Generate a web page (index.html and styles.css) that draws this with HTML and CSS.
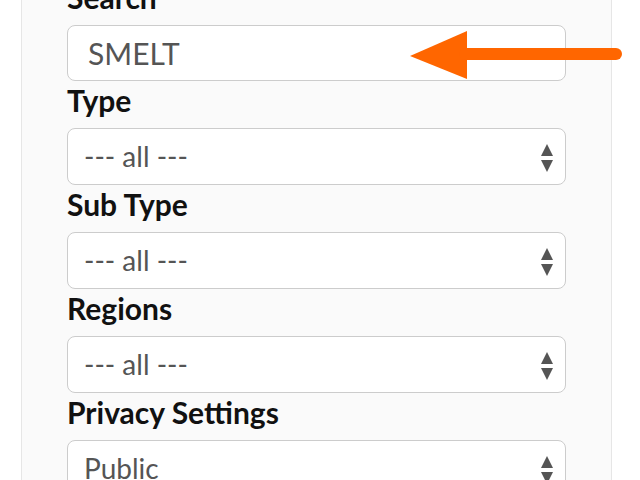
FILE: index.html
```html
<!DOCTYPE html>
<html lang="en">
<head>
    <meta charset="UTF-8">
    <meta name="viewport" content="width=device-width, initial-scale=1.0">
    <title>Search filters</title>
    <link rel="stylesheet" href="styles.css">
</head>
<body>
    <div class="panel">
        <form class="filters">
            <label class="label" for="search">Search</label>
            <div class="field">
                <input class="control" id="search" type="text" value="SMELT">
                <svg class="pointer" width="220" height="52" viewBox="0 0 220 52">
                    <polygon points="0,25 57,0 57,48" fill="#ff6600"/>
                    <line x1="55" y1="23" x2="206" y2="23" stroke="#ff6600" stroke-width="12" stroke-linecap="round"/>
                </svg>
            </div>

            <label class="label">Type</label>
            <div class="select">--- all ---</div>

            <label class="label">Sub Type</label>
            <div class="select">--- all ---</div>

            <label class="label">Regions</label>
            <div class="select">--- all ---</div>

            <label class="label">Privacy Settings</label>
            <div class="select">Public</div>
        </form>
    </div>
</body>
</html>
```

FILE: styles.css
```css
html, body {
    margin: 0;
    background-color: #ffffff;
    font-family: Lato, "Open Sans", sans-serif;
}
.panel {
    margin-left: 21px;
    width: 589px;
    margin-top: -22px;
    height: 520px;
    background-color: #fafafa;
    border-left: 1px solid #e6e6e6;
    border-right: 1px solid #e6e6e6;
}
.filters {
    display: flex;
    flex-direction: column;
    padding-left: 45px;
    width: 499px;
}
.label {
    font-size: 30px;
    font-weight: bold;
    color: #111;
    height: 47px;
    line-height: 39px;
}
.field {
    position: relative;
}
.control,
.select {
    box-sizing: border-box;
    width: 499px;
    height: 57px;
    border: 1px solid #cccccc;
    border-radius: 8px;
    background-color: #ffffff;
    color: #555;
    font-family: Lato, "Open Sans", sans-serif;
    font-size: 28px;
    padding: 0 20px;
    line-height: 55px;
}
.control {
    height: 56px;
    display: block;
    outline: none;
    font-size: 30px;
}
.select {
    padding-left: 16px;
    position: relative;
}
.select::before {
    content: "";
    position: absolute;
    right: 12px;
    top: 15px;
    border-left: 6px solid transparent;
    border-right: 6px solid transparent;
    border-bottom: 12px solid #555;
}
.select::after {
    content: "";
    position: absolute;
    top: 31px;
    right: 12px;
    border-left: 6px solid transparent;
    border-right: 6px solid transparent;
    border-top: 12px solid #555;
}
.pointer {
    position: absolute;
    left: 343px;
    top: 6px;
}
```
